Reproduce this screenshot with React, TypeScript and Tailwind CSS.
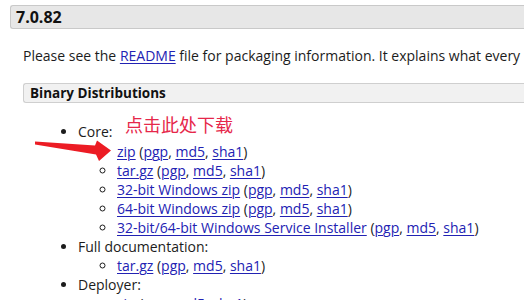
import React from 'react';

type Item = { label: string };

const A = ({ children }: { children: React.ReactNode }) => (
  <a href="#" className="text-[#2222b3] underline underline-offset-[2px] decoration-1">
    {children}
  </a>
);

function Download({ label }: Item) {
  return (
    <li>
      <A>{label}</A> (<A>pgp</A>, <A>md5</A>, <A>sha1</A>)
    </li>
  );
}

export default function App() {
  const core = [
    'zip',
    'tar.gz',
    '32-bit Windows zip',
    '64-bit Windows zip',
    '32-bit/64-bit Windows Service Installer',
  ];

  return (
    <div className="relative w-[524px] h-[300px] overflow-hidden bg-white font-['Open_Sans',sans-serif] text-[14px] text-[#1c1c1c]">
      {/* version header */}
      <div className="pt-[5px] pl-[10px]">
        <div className="h-[24px] border border-r-0 border-[#c9c9c9] rounded-l-[3px] bg-[#e7e7e7] pl-[5px] font-bold text-[16px] leading-[22px] text-[#111]">
          7.0.82
        </div>
      </div>

      <div className="pl-[23px]">
        <p className="mt-[17px] leading-[19px] whitespace-nowrap">
          Please see the <A>README</A> file for packaging information. It explains what every
        </p>

        <div className="mt-[18px] h-[20px] border border-r-0 border-[#cfcfcf] rounded-l-[3px] bg-[#f1f1f1] pl-[6px] font-bold text-[13.5px] leading-[18px] text-[#111]">
          Binary Distributions
        </div>

        <ul className="mt-[19px] pl-[55px] list-disc leading-[19px] whitespace-nowrap">
          <li>
            Core:
            <ul className="pl-[39px] list-[circle] mt-[1px]">
              {core.map((c) => (
                <Download key={c} label={c} />
              ))}
            </ul>
          </li>
          <li>
            Full documentation:
            <ul className="pl-[39px] list-[circle]">
              <Download label="tar.gz" />
            </ul>
          </li>
          <li>
            Deployer:
            <ul className="pl-[39px] list-[circle]">
              <Download label="zip" />
            </ul>
          </li>
        </ul>
      </div>

      {/* annotation */}
      <span className="absolute left-[125px] top-[113px] text-[18px] leading-[22px] text-[#e6274a] font-['Noto_Sans_CJK_SC',sans-serif]">
        点击此处下载
      </span>
      <svg className="absolute left-0 top-0" width="524" height="300" viewBox="0 0 524 300">
        <polygon
          points="35,141.5 95,145.5 97,140.5 111,150.5 99,161 96,154.5 35,144.5"
          fill="#ec1c24"
        />
      </svg>
    </div>
  );
}
